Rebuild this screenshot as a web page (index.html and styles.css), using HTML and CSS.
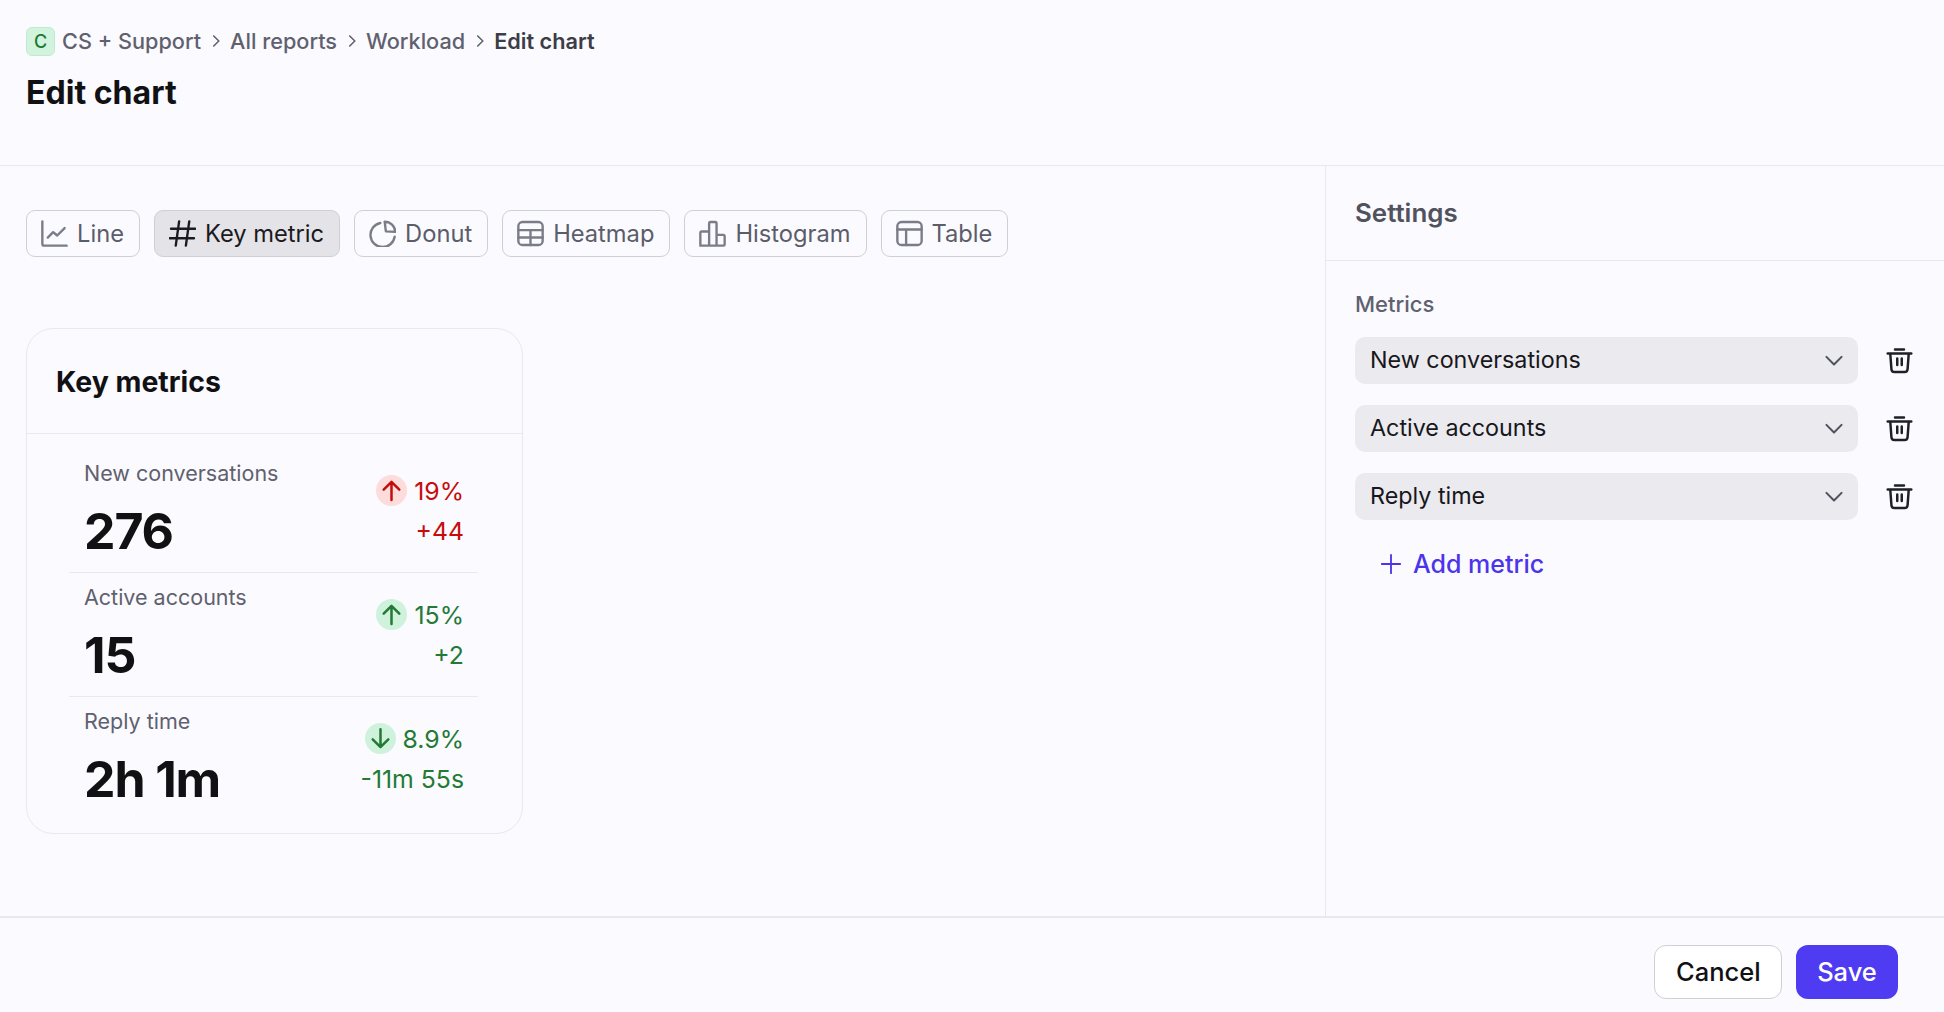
FILE: index.html
```html
<!DOCTYPE html>
<html lang="en">
<head>
    <meta charset="UTF-8">
    <title>Edit chart</title>
    <link rel="stylesheet" href="styles.css">
</head>
<body>
    <header class="page-header">
        <nav class="crumbs">
            <span class="team-badge">C</span>
            <span>CS + Support</span>
            <svg class="crumb-sep" viewBox="0 0 16 16"><path d="M6 3.5 10.5 8 6 12.5"/></svg>
            <span>All reports</span>
            <svg class="crumb-sep" viewBox="0 0 16 16"><path d="M6 3.5 10.5 8 6 12.5"/></svg>
            <span>Workload</span>
            <svg class="crumb-sep" viewBox="0 0 16 16"><path d="M6 3.5 10.5 8 6 12.5"/></svg>
            <span class="crumb-current">Edit chart</span>
        </nav>
        <h1>Edit chart</h1>
    </header>

    <div class="workspace">
        <main class="editor">
            <div class="chart-tabs">
                <button class="tab">
                    <svg class="tab-icon" viewBox="2 2 20 20"><path d="M3 3v16.5a1.5 1.5 0 0 0 1.5 1.5H21"/><path d="m7 15 4-4 3 2.5L19.5 8"/></svg>
                    Line
                </button>
                <button class="tab tab-active">
                    <svg class="tab-icon" viewBox="2 2 20 20"><path d="M9.5 3 7 21M17 3l-2.5 18M3.5 8.500h18M2.500 15.500h18"/></svg>
                    Key metric
                </button>
                <button class="tab">
                    <svg class="tab-icon" viewBox="2 2 20 20"><path d="M10.4 4.200A9 9 0 1 0 21 14.400"/><path d="M13.600 3.200 14.500 10.400 21.500 10.800A8 8 0 0 0 13.600 3.200z"/></svg>
                    Donut
                </button>
                <button class="tab">
                    <svg class="tab-icon" viewBox="2 2 20 20"><rect x="3" y="3.5" width="18" height="17" rx="3"/><path d="M3 9.500h18M3 15h18M12 9.500v11"/></svg>
                    Heatmap
                </button>
                <button class="tab">
                    <svg class="tab-icon" viewBox="2 2 20 20"><path d="M3 21V11.500a1 1 0 0 1 1-1h5.500M9.500 21V4.500a1 1 0 0 1 1-1h3.500a1 1 0 0 1 1 1V21M15 13h5a1 1 0 0 1 1 1v6a1 1 0 0 1-1 1H4a1 1 0 0 1-1-1"/></svg>
                    Histogram
                </button>
                <button class="tab">
                    <svg class="tab-icon" viewBox="2 2 20 20"><rect x="3" y="3.5" width="18" height="17" rx="3"/><path d="M3 9h18M9.500 9v11.500"/></svg>
                    Table
                </button>
            </div>

            <section class="card">
                <h2 class="card-title">Key metrics</h2>
                <div class="metric-list">
                    <div class="metric">
                        <div class="metric-main">
                            <div class="metric-label">New conversations</div>
                            <div class="metric-value">276</div>
                        </div>
                        <div class="metric-delta bad">
                            <div class="delta-pct">
                                <span class="delta-icon"><svg viewBox="0 0 16 16"><path d="M8 14V2.500M3 7.500l5-5 5 5"/></svg></span>
                                19%
                            </div>
                            <div>+44</div>
                        </div>
                    </div>
                    <div class="metric">
                        <div class="metric-main">
                            <div class="metric-label">Active accounts</div>
                            <div class="metric-value">15</div>
                        </div>
                        <div class="metric-delta good">
                            <div class="delta-pct">
                                <span class="delta-icon"><svg viewBox="0 0 16 16"><path d="M8 14V2.500M3 7.500l5-5 5 5"/></svg></span>
                                15%
                            </div>
                            <div>+2</div>
                        </div>
                    </div>
                    <div class="metric">
                        <div class="metric-main">
                            <div class="metric-label">Reply time</div>
                            <div class="metric-value">2h 1m</div>
                        </div>
                        <div class="metric-delta good">
                            <div class="delta-pct">
                                <span class="delta-icon"><svg viewBox="0 0 16 16"><path d="M8 2v11.500M3 8.500l5 5 5-5"/></svg></span>
                                8.9%
                            </div>
                            <div>-11m 55s</div>
                        </div>
                    </div>
                </div>
            </section>
        </main>

        <aside class="settings">
            <h2 class="settings-title">Settings</h2>
            <div class="settings-body">
                <div class="field-label">Metrics</div>
                <div class="metric-picker">
                    <div class="select">New conversations
                        <svg class="chevron" viewBox="0 0 16 16"><path d="m2.500 5 5.500 5.500L13.500 5"/></svg>
                    </div>
                    <svg class="trash" viewBox="0 0 24 24"><path d="M1.500 5.800h21M8 2.200h8M3.800 6l1 13.500a2.800 2.800 0 0 0 2.800 2.700h8.800a2.800 2.800 0 0 0 2.800-2.700l1-13.500M10 10.200V16M14 10.200V16"/></svg>
                </div>
                <div class="metric-picker">
                    <div class="select">Active accounts
                        <svg class="chevron" viewBox="0 0 16 16"><path d="m2.500 5 5.500 5.500L13.500 5"/></svg>
                    </div>
                    <svg class="trash" viewBox="0 0 24 24"><path d="M1.500 5.800h21M8 2.200h8M3.800 6l1 13.500a2.800 2.800 0 0 0 2.800 2.700h8.800a2.800 2.800 0 0 0 2.800-2.700l1-13.500M10 10.200V16M14 10.200V16"/></svg>
                </div>
                <div class="metric-picker">
                    <div class="select">Reply time
                        <svg class="chevron" viewBox="0 0 16 16"><path d="m2.500 5 5.500 5.500L13.500 5"/></svg>
                    </div>
                    <svg class="trash" viewBox="0 0 24 24"><path d="M1.500 5.800h21M8 2.200h8M3.800 6l1 13.500a2.800 2.800 0 0 0 2.800 2.700h8.800a2.800 2.800 0 0 0 2.800-2.700l1-13.500M10 10.200V16M14 10.200V16"/></svg>
                </div>
                <button class="add-metric">
                    <svg class="plus" viewBox="0 0 24 24"><path d="M12 2v20M2 12h20"/></svg>
                    Add metric
                </button>
            </div>
        </aside>
    </div>

    <footer class="page-footer">
        <button class="btn btn-cancel">Cancel</button>
        <button class="btn btn-save">Save</button>
    </footer>
</body>
</html>
```

FILE: styles.css
```css
* {
    box-sizing: border-box;
}
body {
    margin: 0;
    height: 100vh;
    display: flex;
    flex-direction: column;
    font-family: Inter, "Liberation Sans", sans-serif;
    background: #fbfaff;
    color: #111114;
    overflow: hidden;
}
button {
    font-family: inherit;
}
svg {
    fill: none;
    stroke: currentColor;
    stroke-linecap: round;
    stroke-linejoin: round;
}

/* header */
.page-header {
    height: 166px;
    flex: none;
    padding: 26px 26px 0;
    border-bottom: 1px solid #e8e8ee;
}
.crumbs {
    display: flex;
    align-items: center;
    height: 29px;
    font-size: 21.7px;
    font-weight: 500;
    color: #5f616e;
}
.team-badge {
    width: 29px;
    height: 29px;
    margin: 2px 7px 0 0;
    display: flex;
    align-items: center;
    justify-content: center;
    border-radius: 6px;
    border: 1px solid #bfeccf;
    background: #d2f4de;
    color: #1a7a30;
    font-size: 18px;
}
.crumb-sep {
    width: 18px;
    height: 18px;
    margin: 0 5.5px;
    stroke-width: 1.4;
}
.crumb-current {
    color: #3c3d46;
    font-weight: 600;
}
.page-header h1 {
    margin: 20px 0 0;
    font-size: 32.1px;
    line-height: 36px;
    font-weight: 700;
}

/* main area */
.workspace {
    flex: 1;
    display: flex;
    min-height: 0;
}
.editor {
    flex: 1;
    padding: 44px 26px 0;
}
.chart-tabs {
    display: flex;
    gap: 14px;
}
.tab {
    height: 47px;
    display: flex;
    align-items: center;
    gap: 9px;
    padding: 0 15px 0 14px;
    background: transparent;
    border: 1px solid #cfcfd6;
    border-radius: 9px;
    font-size: 23.7px;
    color: #5b5d69;
}
.tab-icon {
    width: 27px;
    height: 27px;
    stroke-width: 1.75;
    color: #7a7c88;
}
.tab-active {
    background: #e4e3e8;
    color: #1a1a20;
}
.tab-active .tab-icon {
    color: #1a1a20;
}

.card {
    width: 497px;
    height: 506px;
    margin-top: 71px;
    border: 1px solid #e8e8ee;
    border-radius: 27px;
}
.card-title {
    margin: 0;
    height: 105px;
    padding: 0 29px;
    display: flex;
    align-items: center;
    font-size: 28.4px;
    font-weight: 700;
    color: #111114;
    border-bottom: 1px solid #e8e8ee;
}
.metric-list {
    padding: 15px 44px 0 42px;
}
.metric {
    height: 124px;
    padding: 0 14px 0 15px;
    display: flex;
    justify-content: space-between;
    border-bottom: 1px solid #e8e8ee;
}
.metric:last-child {
    border-bottom: none;
}
.metric-label {
    font-size: 21.5px;
    line-height: 26px;
    margin-top: 11px;
    color: #5f616e;
}
.metric-value {
    font-size: 50px;
    line-height: 64px;
    margin-top: 13px;
    font-weight: 700;
    letter-spacing: -1.1px;
}
.metric-delta {
    display: flex;
    flex-direction: column;
    align-items: flex-end;
    font-size: 24.8px;
    line-height: 30px;
    padding-top: 26px;
    gap: 10px;
}
.delta-pct {
    display: flex;
    align-items: center;
    gap: 7px;
}
.delta-icon {
    width: 31px;
    height: 31px;
    display: flex;
    align-items: center;
    justify-content: center;
    border-radius: 50%;
}
.delta-icon svg {
    width: 25px;
    height: 25px;
    stroke-width: 1.6;
}
.bad {
    color: #c40d0d;
}
.bad .delta-icon {
    background: #fddcdc;
}
.good {
    color: #237a35;
}
.good .delta-icon {
    background: #cef2dc;
}

/* settings sidebar */
.settings {
    width: 619px;
    flex: none;
    border-left: 1px solid #e8e8ee;
}
.settings-title {
    margin: 0;
    height: 95px;
    padding: 0 29px 2px;
    display: flex;
    align-items: center;
    font-size: 25.9px;
    font-weight: 600;
    color: #50525d;
    border-bottom: 1px solid #e8e8ee;
}
.settings-body {
    padding: 30px 0 0 29px;
}
.field-label {
    font-size: 22px;
    line-height: 26px;
    font-weight: 500;
    color: #5f616e;
    margin-bottom: 20px;
}
.metric-picker {
    display: flex;
    align-items: center;
    margin-bottom: 21px;
}
.select {
    width: 503px;
    height: 47px;
    padding: 0 13px 2px 15px;
    display: flex;
    align-items: center;
    justify-content: space-between;
    background: #ebeaee;
    border-radius: 10px;
    font-size: 23.3px;
    color: #17171c;
}
.chevron {
    width: 22px;
    height: 22px;
    margin-top: 2px;
    color: #50525d;
    stroke-width: 1.5;
}
.trash {
    width: 27px;
    height: 27px;
    margin-left: 28px;
    color: #1f1f27;
    stroke-width: 2.2;
}
.add-metric {
    display: flex;
    align-items: center;
    gap: 11px;
    margin: 0 0 0 25px;
    padding: 0;
    height: 46px;
    background: none;
    border: none;
    font-size: 25px;
    font-weight: 500;
    color: #4b35ea;
}
.plus {
    width: 22px;
    height: 22px;
    stroke-width: 2;
}

/* footer */
.page-footer {
    height: 96px;
    flex: none;
    display: flex;
    justify-content: flex-end;
    align-items: flex-start;
    gap: 14px;
    padding: 27px 46px 0 0;
    border-top: 2px solid #e8e8ee;
}
.btn {
    height: 54px;
    padding: 0 21px 2px;
    border-radius: 12px;
    font-size: 25.5px;
    font-weight: 500;
}
.btn-cancel {
    width: 128px;
    background: #fff;
    border: 1px solid #cfcfd6;
    color: #111114;
}
.btn-save {
    width: 102px;
    background: #4f3bf2;
    border: none;
    color: #fff;
}
```
